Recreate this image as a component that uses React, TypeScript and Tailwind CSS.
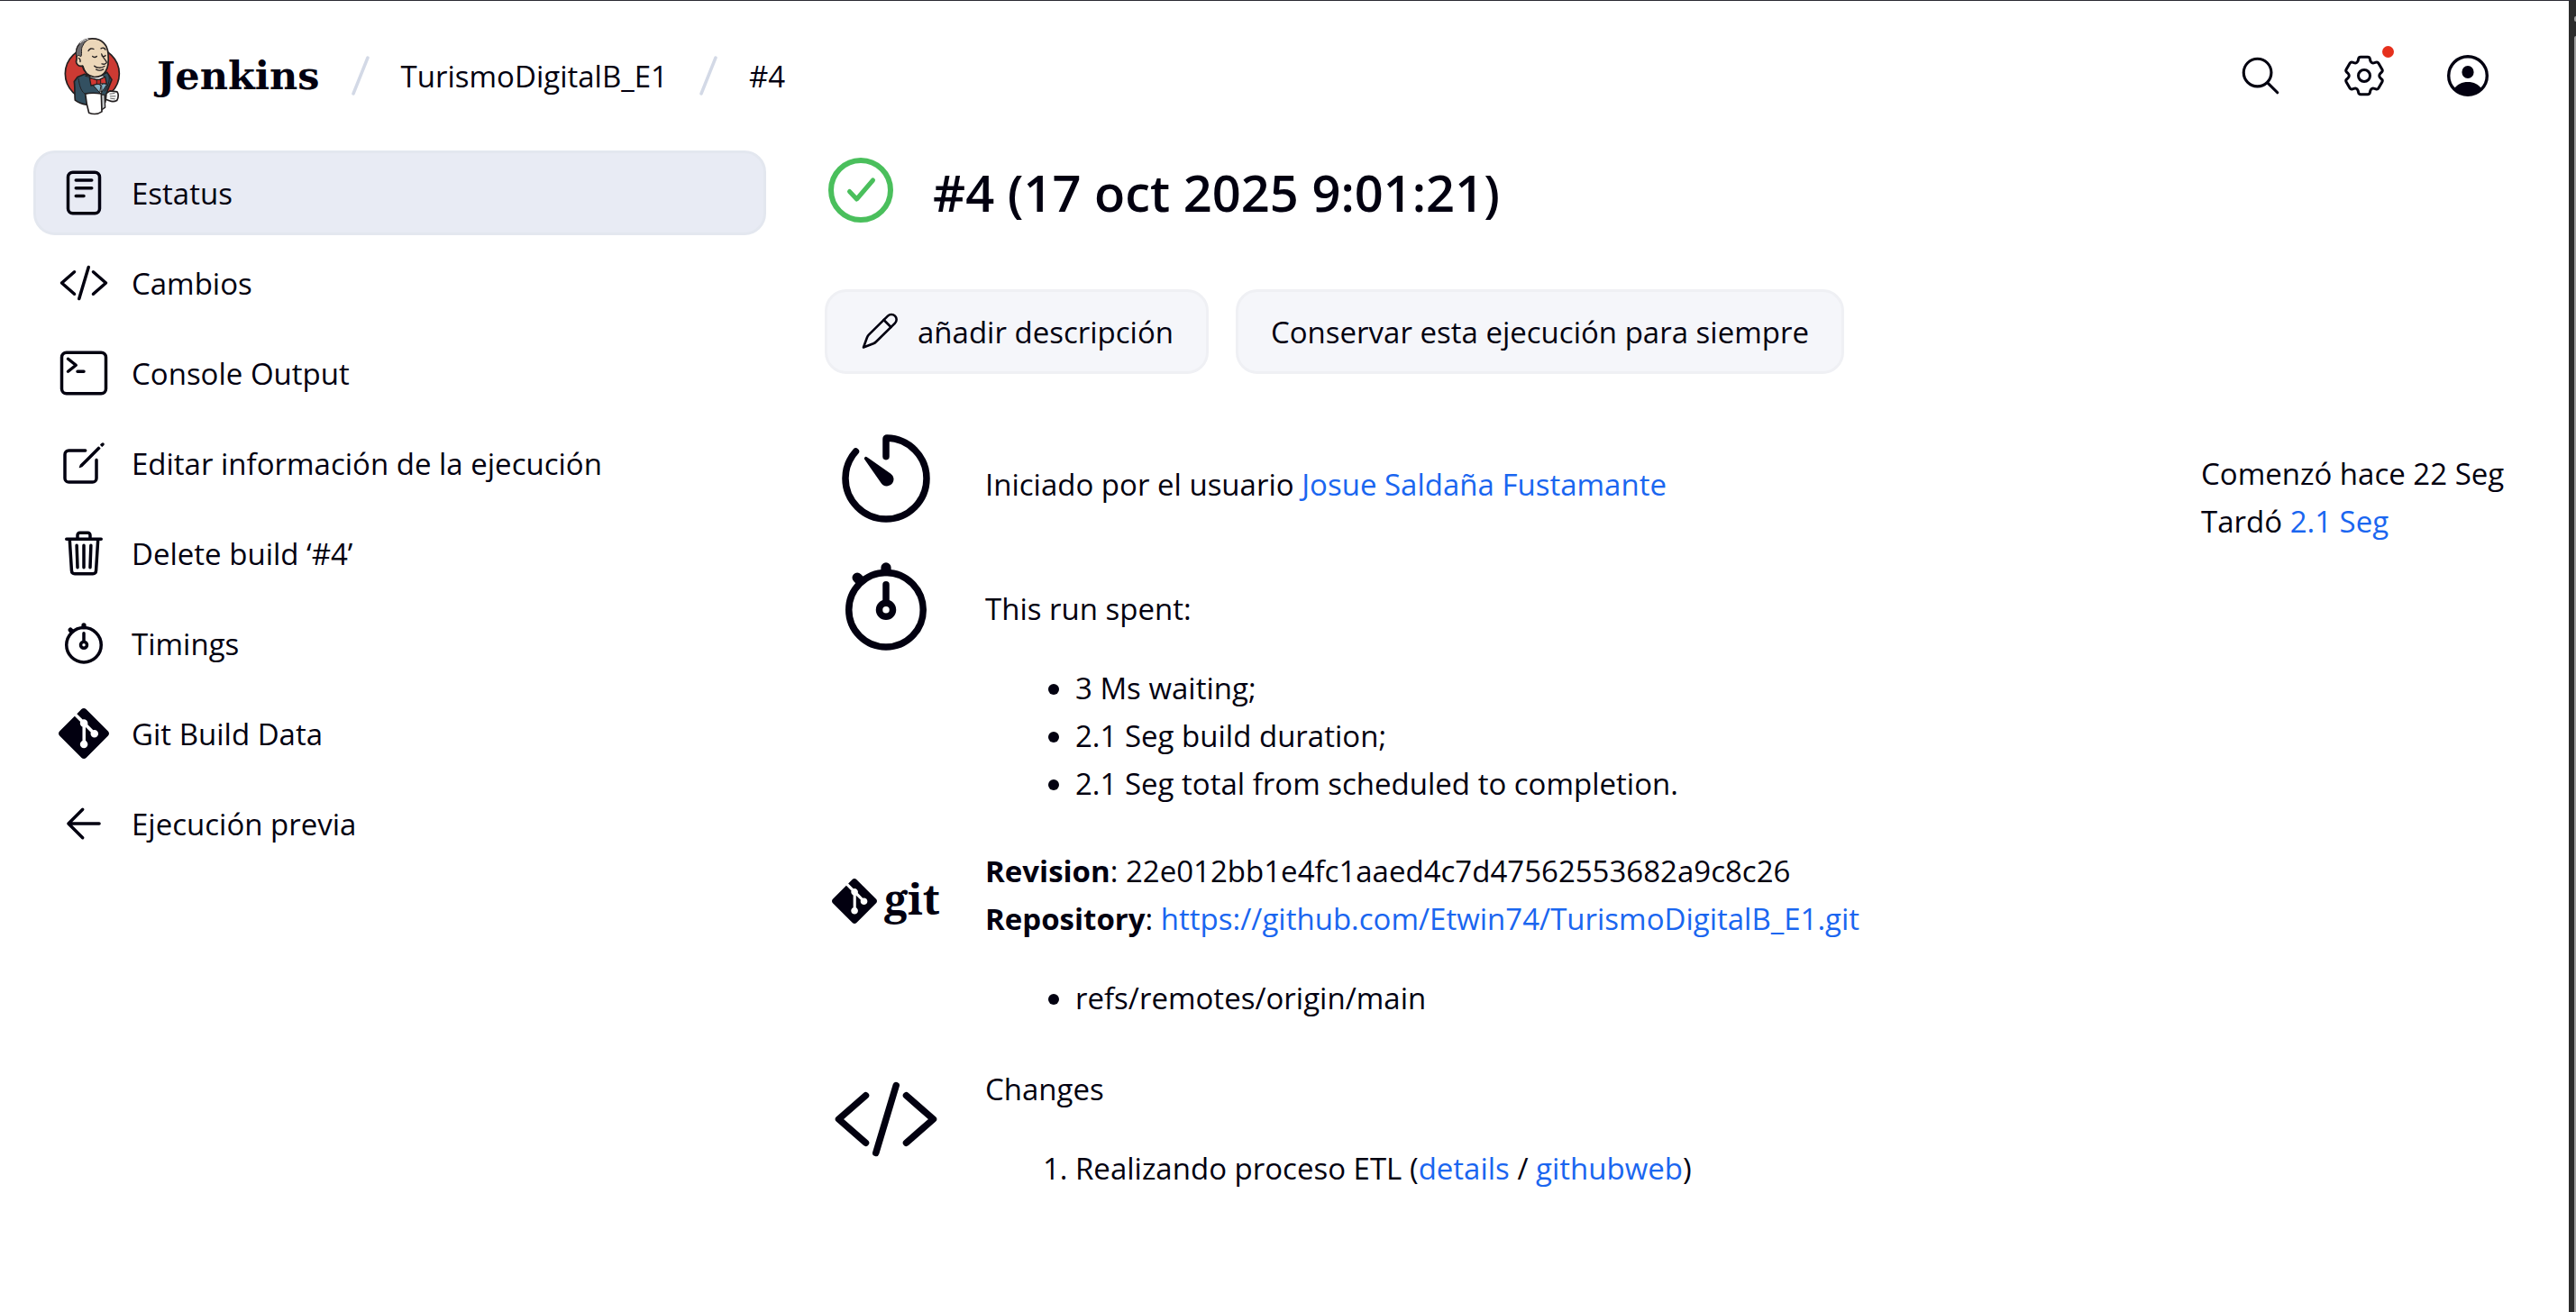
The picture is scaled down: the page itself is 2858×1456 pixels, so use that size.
import type { ReactNode } from "react";
import { SiGit } from "react-icons/si";

type IconProps = { className?: string };

function LineIcon({ className = "size-14", children }: IconProps & { children: ReactNode }) {
  return (
    <svg
      viewBox="0 0 512 512"
      aria-hidden="true"
      className={`shrink-0 ${className}`}
      fill="none"
      stroke="currentColor"
      strokeWidth="32"
      strokeLinecap="round"
      strokeLinejoin="round"
    >
      {children}
    </svg>
  );
}

const ReaderIcon = () => (
  <LineIcon>
    <rect x="96" y="48" width="320" height="416" rx="48" />
    <path d="M176 128h160M176 208h160M176 288h80" />
  </LineIcon>
);

const CodeIcon = ({ className }: IconProps) => (
  <LineIcon className={className}>
    <path d="M160 368L32 256l128-112M352 368l128-112-128-112M304 96l-96 320" />
  </LineIcon>
);

const TerminalIcon = () => (
  <LineIcon>
    <rect x="32" y="48" width="448" height="416" rx="48" />
    <path d="M96 112l80 64-80 64M192 240h64" />
  </LineIcon>
);

const EditIcon = () => (
  <LineIcon>
    <path d="M384 224v184a40 40 0 01-40 40H104a40 40 0 01-40-40V168a40 40 0 0140-40h167.48" />
    <path
      fill="currentColor"
      stroke="none"
      d="M459.94 53.25a16.06 16.06 0 00-23.22-.56L424.35 65a8 8 0 000 11.31l11.34 11.32a8 8 0 0011.34 0l12.06-12c6.1-6.09 6.67-16.01.85-22.38zM399.34 90L218.82 270.2a9 9 0 00-2.31 3.93L208.16 299a3.91 3.91 0 004.86 4.86l24.85-8.35a9 9 0 003.93-2.31L422 112.66a9 9 0 000-12.66l-9.95-10a9 9 0 00-12.71 0z"
    />
  </LineIcon>
);

const TrashIcon = () => (
  <LineIcon>
    <path d="M112 112l20 320c.95 18.49 14.4 32 32 32h184c17.67 0 30.87-13.51 32-32l20-320M80 112h352M192 112V72a23.93 23.93 0 0124-24h80a23.93 23.93 0 0124 24v40M256 176v224M184 176l8 224M328 176l-8 224" />
  </LineIcon>
);

const StopwatchIcon = ({ className }: IconProps) => (
  <LineIcon className={className}>
    <path d="M256 232v-80M256 96a176 176 0 10176 176A176 176 0 00256 96z" />
    <path strokeWidth="48" d="M256 88V72M132 132l-12-12" />
    <circle cx="256" cy="272" r="32" />
  </LineIcon>
);

const TimerIcon = ({ className }: IconProps) => (
  <LineIcon className={className}>
    <path d="M112.91 128A191.85 191.85 0 0064 254c-1.18 106.35 85.65 193.8 192 194 106.2.2 192-85.83 192-192 0-104.54-83.55-189.61-187.5-192a4.36 4.36 0 00-4.5 4.37V152" />
    <path
      fill="currentColor"
      stroke="none"
      d="M233.38 278.63l-79-113a8.13 8.13 0 0111.32-11.32l113 79a32.5 32.5 0 01-37.25 53.26 33.21 33.21 0 01-8.07-7.94z"
    />
  </LineIcon>
);

const ArrowIcon = () => (
  <LineIcon>
    <path d="M244 400L100 256l144-144M108 256h304" />
  </LineIcon>
);

const SearchIcon = () => (
  <LineIcon className="size-[50px]">
    <path d="M221.09 64a157.09 157.09 0 10157.09 157.09A157.1 157.1 0 00221.09 64zM338.29 338.29L448 448" />
  </LineIcon>
);

/* Six-toothed gear, built from a ring of rounded corners. */
function gearPath() {
  const points: [number, number][] = [];
  for (let tooth = 0; tooth < 6; tooth++) {
    const mid = 90 + tooth * 60;
    for (const [angle, radius] of [
      [mid - 16, 21.5],
      [mid + 16, 21.5],
      [mid + 25, 16.8],
      [mid + 35, 16.8],
    ]) {
      const rad = (angle * Math.PI) / 180;
      points.push([25 + radius * Math.cos(rad), 25 - radius * Math.sin(rad)]);
    }
  }
  const toward = (a: [number, number], b: [number, number], d: number) => {
    const len = Math.hypot(b[0] - a[0], b[1] - a[1]);
    const t = Math.min(d / len, 0.5);
    return `${(a[0] + (b[0] - a[0]) * t).toFixed(2)} ${(a[1] + (b[1] - a[1]) * t).toFixed(2)}`;
  };
  return (
    points
      .map((p, i) => {
        const prev = points[(i + points.length - 1) % points.length];
        const next = points[(i + 1) % points.length];
        return `${i ? "L" : "M"}${toward(p, prev, 2)}Q${p[0].toFixed(2)} ${p[1].toFixed(2)} ${toward(p, next, 2)}`;
      })
      .join("") + "Z"
  );
}

const GearIcon = () => (
  <svg viewBox="0 0 50 50" aria-hidden="true" className="size-[50px]" fill="none" stroke="currentColor" strokeWidth="3" strokeLinejoin="round">
    <path d={gearPath()} />
    <circle cx="25" cy="25" r="6.5" />
  </svg>
);

const UserIcon = () => (
  <svg viewBox="0 0 50 50" aria-hidden="true" className="size-[50px]">
    <circle cx="25" cy="25" r="21.3" fill="none" stroke="currentColor" strokeWidth="3.4" />
    <ellipse cx="25" cy="21" rx="6.6" ry="7" fill="currentColor" />
    <path d="M9.5 40C13 34.5 18.5 32 25 32s12 2.5 15.5 8A22.5 22.5 0 0 1 9.5 40z" fill="currentColor" />
  </svg>
);

const PencilIcon = () => (
  <svg viewBox="0 0 44 44" aria-hidden="true" className="size-11" fill="none" stroke="currentColor" strokeWidth="2.6" strokeLinejoin="round" strokeLinecap="round">
    <path d="M4 39.5L8 28.500c.6-1.500 1-2.200 2-3.200L31 4.600a5.500 5.500 0 0 1 8 8L18 33.200c-1 1-1.800 1.600-3 2.100z" />
    <path d="M26.500 9l8 8" />
  </svg>
);

const Slash = () => (
  <svg viewBox="0 0 20 46" aria-hidden="true" className="h-[46px] w-5 shrink-0" fill="none" stroke="#d3d9e6" strokeWidth="3.5" strokeLinecap="round">
    <path d="M18 3L2 43" />
  </svg>
);

const ButlerLogo = () => (
  <svg viewBox="60 30 192 260" aria-hidden="true" className="h-[87px] w-16 shrink-0" stroke="#231f20" strokeWidth="5" strokeLinejoin="round" strokeLinecap="round">
    <ellipse cx="157" cy="152" rx="90" ry="88" fill="#cc3a33" />
    <path d="M108 163L97 178c3 22 1 44 3 62 10 8 24 13 37 15l63-8 8-40 14-35-16-25-38 20-36-14z" fill="#335061" />
    <path d="M111 168c4 22 6 38 20 50M213 158c4 20-6 36-14 52" fill="none" strokeWidth="3" />
    <path d="M135 160l14 3 8 26 29 30 14-30-4-30-20-2z" fill="#f7f8f8" strokeWidth="3" />
    <path d="M160 190l22 25 4-24-10-6zM188 191l1 22 16-24-8-8z" fill="#81b0c4" strokeWidth="3" />
    <path d="M105 92C98 60 122 36 156 35c34-1 52 22 54 50 2 24 1 45-8 58-8 14-22 20-38 20-22-4-36-20-40-37-14 4-24-10-19-22z" fill="#ecd7b9" />
    <path d="M104 94c-6-30 14-52 42-58-10 8-16 12-20 22-8 10-2 24-6 36-4 2-4-4-9-3z" fill="#6d6b6d" strokeWidth="3" />
    <path d="M117 50c8-8 16-11 26-13" fill="none" stroke="#f3f3f3" strokeWidth="3" />
    <path d="M144 76c4-8 12-10 18-6M186 68c6-4 12-2 15 4" fill="none" strokeWidth="4" />
    <path d="M158 94c5 4 10 4 14 0M189 92c5 4 9 3 12-1M188 86c4 14 16 22 17 28-2 7-10 7-16 5" fill="none" strokeWidth="4" />
    <path d="M164 126c8 8 24 8 34 1M170 138c8 4 16 4 24-1M112 100c4 2 6 6 5 12" fill="none" strokeWidth="4" />
    <path d="M126 126c4 14 10 26 24 36" fill="none" strokeWidth="4" />
    <path d="M148 165l24 7 10-1 18-9 5 23-20 0-8 0-24 7z" fill="#d33833" strokeWidth="4" />
    <path d="M173 171l12 1 0 14-12 1z" fill="#b52a27" strokeWidth="3" />
    <circle cx="187" cy="211" r="3" fill="#231f20" stroke="none" />
    <path d="M204 217l12-8 24 3c5 8 4 20-1 29-8 4-18 4-25 1l-12-5z" fill="#f7f8f8" />
    <path d="M216 219l15-2M217 227l17 0M218 234l14 2" fill="none" strokeWidth="2" />
    <path d="M184 222l14 0 2 42-14 10z" fill="#c9cdd0" strokeWidth="4" />
    <path d="M134 219c16-4 36-3 53-1l2 60c-13 9-31 9-43 4-6-20-10-42-12-63z" fill="#ffffff" />
  </svg>
);

const GitLogo = () => (
  <div className="flex h-[120px] w-[120px] shrink-0 items-center gap-2">
    <SiGit aria-hidden="true" className="size-[50px] shrink-0" />
    <span className="pb-1.5 font-['Noto_Serif',serif] text-[47px] leading-[50px] font-bold">git</span>
  </div>
);

const tasks: { label: string; icon: ReactNode; active?: boolean }[] = [
  { label: "Estatus", icon: <ReaderIcon />, active: true },
  { label: "Cambios", icon: <CodeIcon /> },
  { label: "Console Output", icon: <TerminalIcon /> },
  { label: "Editar información de la ejecución", icon: <EditIcon /> },
  { label: "Delete build ‘#4’", icon: <TrashIcon /> },
  { label: "Timings", icon: <StopwatchIcon /> },
  { label: "Git Build Data", icon: <SiGit aria-hidden="true" className="size-14 shrink-0" /> },
  { label: "Ejecución previa", icon: <ArrowIcon /> },
];

function TextLink({ children }: { children: ReactNode }) {
  return (
    <a href="#" className="text-[#1a66f0]">
      {children}
    </a>
  );
}

function Header() {
  return (
    <header className="flex h-[166px] items-center justify-between pr-[87px] pl-[70px]">
      <nav aria-label="Ruta" className="flex items-center gap-[35px]">
        <a href="#" className="flex items-center gap-10">
          <ButlerLogo />
          <span className="font-['DejaVu_Serif',serif] text-[43px] leading-[53px] font-bold">Jenkins</span>
        </a>
        <Slash />
        <a href="#">TurismoDigitalB_E1</a>
        <Slash />
        <a href="#">#4</a>
      </nav>
      <div className="flex items-center gap-[65px]">
        <button type="button" aria-label="Buscar">
          <SearchIcon />
        </button>
        <button type="button" aria-label="Administrar Jenkins" className="relative">
          <GearIcon />
          <span className="absolute -top-2 -right-2 size-[13px] rounded-full bg-[#e6301c]" />
        </button>
        <button type="button" aria-label="Usuario">
          <UserIcon />
        </button>
      </div>
    </header>
  );
}

function Sidebar() {
  return (
    <nav aria-label="Tareas" className="flex w-[813px] shrink-0 flex-col gap-1.5">
      {tasks.map((task) => (
        <a
          key={task.label}
          href="#"
          aria-current={task.active ? "page" : undefined}
          className={`flex h-[94px] items-center gap-[25px] rounded-3xl border-3 px-[25px] ${
            task.active ? "border-[#e3e7ef] bg-[#e8ebf4]" : "border-transparent"
          }`}
        >
          {task.icon}
          <span>{task.label}</span>
        </a>
      ))}
    </nav>
  );
}

function Row({ icon, className, children }: { icon: ReactNode; className?: string; children: ReactNode }) {
  return (
    <section className="flex items-start gap-[50px]">
      {icon}
      <div className={className}>{children}</div>
    </section>
  );
}

const buttonClass =
  "flex h-[94px] items-center gap-5 rounded-3xl border-3 border-[#eff0f4] bg-[#f5f6fa] px-9";

export default function App() {
  return (
    <div className="flex min-h-screen border-t border-[#2b2a33] bg-white font-['Open_Sans',sans-serif] text-[33px] leading-[53px] text-[#020010]">
      <div className="min-w-0 flex-1">
        <Header />
        <div className="flex gap-[65px] pr-[65px] pl-[37px]">
          <Sidebar />
          <main className="min-w-0 flex-1 pt-2">
            <div className="flex items-start gap-11 pl-1">
              <svg viewBox="0 0 72 72" role="img" aria-label="Correcto" className="size-[72px] shrink-0" fill="none" stroke="#4abf5c" strokeWidth="6" strokeLinecap="round" strokeLinejoin="round">
                <circle cx="36" cy="36" r="33" />
                <path strokeWidth="5" d="M23.5 37.5l8 8.5 18-21" />
              </svg>
              <h1 className="text-[56px] leading-[76px] font-semibold">#4 (17 oct 2025 9:01:21)</h1>
            </div>

            <div className="mt-[70px] flex gap-[30px]">
              <button type="button" className={buttonClass}>
                <PencilIcon />
                añadir descripción
              </button>
              <button type="button" className={buttonClass}>
                Conservar esta ejecución para siempre
              </button>
            </div>

            <div className="mt-14 flex items-start justify-between gap-12 pl-2">
              <div className="flex flex-col">
                <Row icon={<TimerIcon className="size-[120px]" />} className="pt-10">
                  <p>
                    Iniciado por el usuario <TextLink>Josue Saldaña Fustamante</TextLink>
                  </p>
                </Row>
                <div className="mt-[22px]">
                  <Row icon={<StopwatchIcon className="size-[120px]" />} className="pt-9">
                    <p>This run spent:</p>
                    <ul className="mt-[35px] list-disc pl-[100px]">
                      <li>3 Ms waiting;</li>
                      <li>2.1 Seg build duration;</li>
                      <li>2.1 Seg total from scheduled to completion.</li>
                    </ul>
                  </Row>
                </div>
                <div className="mt-11">
                  <Row icon={<GitLogo />}>
                    <p>
                      <b>Revision</b>: 22e012bb1e4fc1aaed4c7d47562553682a9c8c26
                    </p>
                    <p>
                      <b>Repository</b>: <TextLink>https://github.com/Etwin74/TurismoDigitalB_E1.git</TextLink>
                    </p>
                    <ul className="mt-[35px] list-disc pl-[100px]">
                      <li>refs/remotes/origin/main</li>
                    </ul>
                  </Row>
                </div>
                <div className="mt-12">
                  <Row icon={<CodeIcon className="size-[120px]" />}>
                    <p>Changes</p>
                    <ol className="mt-[35px] list-decimal pl-[100px]">
                      <li>
                        Realizando proceso ETL (<TextLink>details</TextLink> / <TextLink>githubweb</TextLink>)
                      </li>
                    </ol>
                  </Row>
                </div>
              </div>

              <div className="min-w-[343px] shrink-0 pt-7">
                <p>Comenzó hace 22 Seg</p>
                <p>
                  Tardó <TextLink>2.1 Seg</TextLink>
                </p>
              </div>
            </div>
          </main>
        </div>
      </div>
      <div aria-hidden="true" className="flex w-2 shrink-0 flex-col items-end bg-[#2c2c2c]">
        <span className="mt-[17px] h-1.5 w-0.5 rounded-l-full bg-[#9f9f9f]" />
        <span className="mt-4 w-0.5 flex-1 rounded-tl-full bg-[#9f9f9f]" />
      </div>
    </div>
  );
}
